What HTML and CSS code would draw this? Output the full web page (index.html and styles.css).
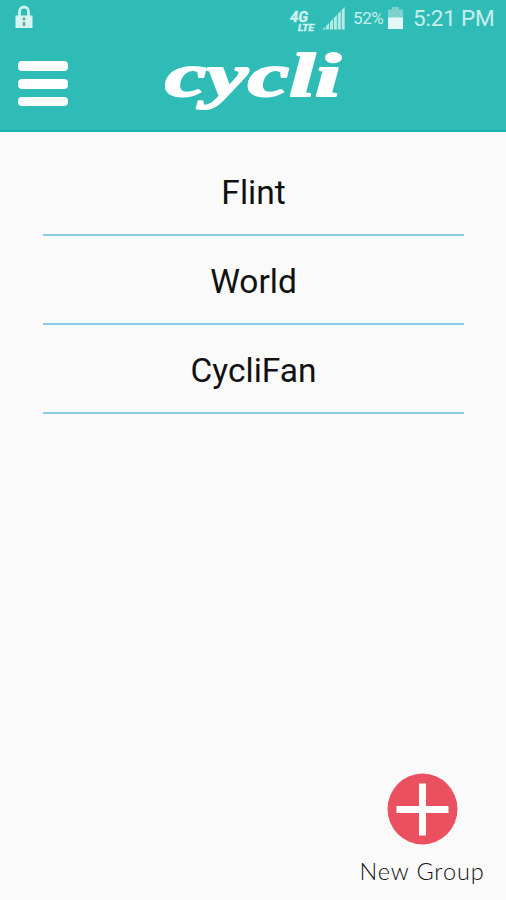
FILE: index.html
```html
<!DOCTYPE html>
<html lang="en">

<head>
    <meta charset="UTF-8">
    <meta name="viewport" content="width=device-width, initial-scale=1.0">
    <title>Cycli</title>

    <link rel="stylesheet" href="styles.css">
</head>

<body>
    <header class="header">
        <div class="statusBar">
            <svg class="lock" width="18" height="24" viewBox="0 0 18 24">
                <path d="M4.5 11V6.500a4.500 4.500 0 0 1 9 0V11" fill="none" stroke="#c9f1ee" stroke-width="2.800"/>
                <rect x="0.500" y="10.500" width="17" height="12.500" fill="#d6f5f2"/>
                <path d="M9 12.500v3M9 17v4" stroke="#68aca5" stroke-width="2.600"/>
            </svg>

            <svg class="network" width="27" height="24" viewBox="0 0 27 24">
                <text class="gen" x="1" y="14" textLength="18" lengthAdjust="spacingAndGlyphs">4G</text>
                <text class="lte" x="9" y="22.500" textLength="16" lengthAdjust="spacingAndGlyphs">LTE</text>
            </svg>
            <svg class="signal" width="23" height="23" viewBox="0 0 23 23">
                <path d="M0 22.500h3.300v-2.500zM4.100 22.500h3v-6.500l-3 3zM8 22.500h3v-10.500l-3 3zM11.900 22.500h3V8l-3 3zM15.800 22.500h3V4l-3 3zM19.700 22.500h3V0l-3 3z"/>
            </svg>
            <span class="percent">52%</span>
            <svg class="battery" width="15" height="22" viewBox="0 0 15 22">
                <path d="M4 0h7v2.500h4V11H0V2.500h4z" fill="#7dd2ce"/>
                <rect y="10.500" width="15" height="11.500" fill="#e2f7f6"/>
            </svg>
            <span class="time">5:21 PM</span>
        </div>

        <div class="navBar">
            <div class="menu">
                <span></span>
                <span></span>
                <span></span>
            </div>
            <svg class="logo" width="200" height="84" viewBox="0 0 200 84">
                <text x="6" y="50.500" textLength="176" lengthAdjust="spacingAndGlyphs">cycli</text>
            </svg>
        </div>
    </header>

    <main class="groups">
        <div class="group">Flint</div>
        <div class="group">World</div>
        <div class="group">CycliFan</div>
    </main>

    <div class="newGroup">
        <svg width="71" height="72" viewBox="0 0 71 72">
            <ellipse cx="35.500" cy="36" rx="35" ry="35.500" fill="#eb5060"/>
            <path d="M9.500 36.500h52M35.500 10.500v52" stroke="#fff" stroke-width="7"/>
        </svg>
        <span>New Group</span>
    </div>
</body>

</html>
```

FILE: styles.css
```css
*{
    margin: 0;
    padding: 0;
    box-sizing: border-box;
}

body{
    display: flex;
    flex-direction: column;
    height: 100vh;
    overflow: hidden;
    background-color: #fafafa;
    font-family: Roboto, sans-serif;
}

.header{
    height: 132px;
    background-color: #30bcb6;
    border-bottom: 2px solid #18b0a9;
}

.statusBar{
    display: flex;
    align-items: center;
    height: 36px;
    padding: 0 11px 0 15px;
    color: #c5efed;
}

.lock{
    margin-right: auto;
    margin-bottom: 2px;
}

.network{
    margin-right: 6px;
    margin-top: 3px;
    fill: #d0f3f1;
    stroke: #d0f3f1;
    stroke-width: 0.4px;
    font-weight: bold;
    font-style: italic;
}

.gen{
    font-size: 15px;
}

.lte{
    font-size: 9px;
}

.signal{
    margin-right: 8px;
    fill: #b5eae7;
}

.percent{
    width: 31px;
    margin-right: 4px;
    font-size: 17px;
    letter-spacing: -0.4px;
}

.battery{
    margin-right: 10px;
}

.time{
    width: 82px;
    font-size: 22.5px;
    letter-spacing: -0.2px;
    white-space: nowrap;
}

.navBar{
    display: flex;
    align-items: flex-start;
    padding: 9px 18px 0;
}

.menu{
    display: flex;
    flex-direction: column;
    gap: 8px;
    width: 50px;
    padding-top: 16px;
}

.menu span{
    height: 10px;
    border-radius: 4px;
    background-color: white;
}

.menu span:last-child{
    height: 9px;
}

.logo{
    margin-left: 91px;
    overflow: visible;
}

.logo text{
    font-family: "Liberation Serif", serif;
    font-size: 62px;
    font-weight: bold;
    font-style: italic;
    fill: white;
    stroke: white;
    stroke-width: 2px;
    stroke-linejoin: round;
}

.groups{
    flex: 1;
    padding: 15px 42px 0 43px;
}

.group{
    height: 89px;
    padding-top: 26px;
    border-bottom: 2px solid #8ecbe9;
    color: #111;
    font-size: 33.5px;
    line-height: 40px;
    text-align: center;
}

.newGroup{
    display: flex;
    flex-direction: column;
    align-items: center;
    align-self: flex-end;
    width: 126px;
    height: 127px;
    margin-right: 21px;
    color: #111;
    font-family: Lato, sans-serif;
    font-size: 23.5px;
    font-weight: 300;
    line-height: 30px;
    letter-spacing: 0.9px;
    white-space: nowrap;
}

.newGroup span{
    margin-top: 11px;
}
```
